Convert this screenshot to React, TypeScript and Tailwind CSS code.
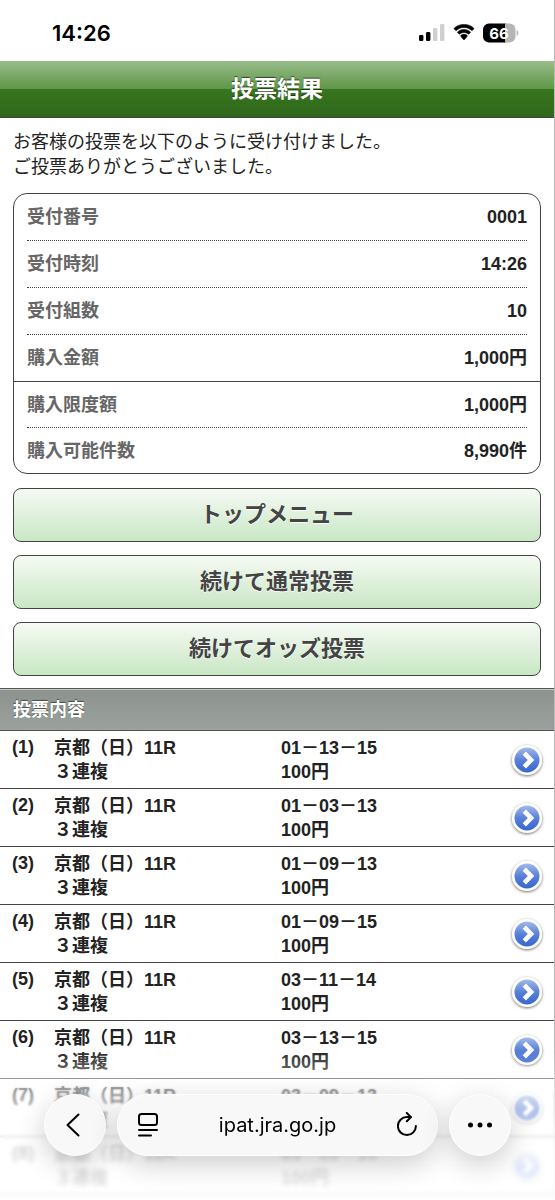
import { Fragment } from "react";

const receipt = [
  { label: "受付番号", value: "0001" },
  { label: "受付時刻", value: "14:26" },
  { label: "受付組数", value: "10" },
  { label: "購入金額", value: "1,000円" },
];

const limits = [
  { label: "購入限度額", value: "1,000円" },
  { label: "購入可能件数", value: "8,990件" },
];

const actions = ["トップメニュー", "続けて通常投票", "続けてオッズ投票"];

const bets = [
  "01－13－15",
  "01－03－13",
  "01－09－13",
  "01－09－15",
  "03－11－14",
  "03－13－15",
  "03－09－13",
  "03－09－15",
];

function StatusBar() {
  return (
    <div className="flex h-[61px] items-center justify-between pl-[52px] pr-[35px] pt-1 text-black">
      <span className="font-['Inter',sans-serif] text-[22px] font-semibold">14:26</span>
      <div className="flex items-center gap-2">
        {/* Signal */}
        <svg width="26" height="17" viewBox="0 0 26 17">
          <rect x="0" y="11" width="4.4" height="6" rx="1.3" />
          <rect x="7" y="8" width="4.4" height="9" rx="1.3" />
          <rect x="14" y="4" width="4.4" height="13" rx="1.3" fill="#cfcfcf" />
          <rect x="21" y="0" width="4.4" height="17" rx="1.3" fill="#cfcfcf" />
        </svg>
        {/* Wifi */}
        <svg width="22" height="17" viewBox="0 0 22 17" stroke="currentColor" strokeWidth="0.6">
          <path d="M11 3.4c2.9 0 5.6 1.1 7.6 3 .2.2.5.2.7 0l1.5-1.5c.2-.2.2-.5 0-.7C18.2 1.600 14.700.4 11 .4S3.800 1.600 1.200 4.200c-.2.2-.2.5 0 .7l1.500 1.500c.2.200.5.200.7 0 2-1.900 4.700-3 7.600-3z" />
          <path d="M11 8.500c1.600 0 3.100.6 4.200 1.600.2.200.5.200.7 0l1.500-1.500c.2-.2.2-.5 0-.7C15.700 6.300 13.400 5.400 11 5.400s-4.700.9-6.400 2.500c-.2.2-.2.500 0 .7l1.500 1.500c.2.200.5.200.7 0C7.900 9.100 9.400 8.500 11 8.500z" />
          <path d="M14.200 12.200c.2-.2.2-.5 0-.7-.8-.8-2-1.200-3.200-1.200s-2.400.4-3.200 1.200c-.2.2-.2.5 0 .7l2.800 3.500c.2.200.6.200.8 0z" />
        </svg>
        {/* Battery */}
        <svg width="36" height="20" viewBox="0 0 36 20">
          <path d="M6 .5h17v19H6a6 6 0 0 1-6-6v-7a6 6 0 0 1 6-6z" />
          <path d="M22 .5h4.500a6 6 0 0 1 6 6v7a6 6 0 0 1-6 6H22z" fill="#b5b5b5" />
          <path d="M33.700 7c1 .4 1.600 1.600 1.600 3s-.6 2.600-1.600 3z" fill="#b5b5b5" />
          <text x="16" y="15.500" textAnchor="middle" fontFamily="Inter, sans-serif" fontSize="15" fontWeight="700" fill="#fff">
            66
          </text>
        </svg>
      </div>
    </div>
  );
}

function Arrow() {
  return (
    <svg width="36" height="36" viewBox="0 0 36 36" className="shrink-0">
      <defs>
        <linearGradient id="arrowFill" x1="0" y1="0" x2="0" y2="1">
          <stop offset="0" stopColor="#a3baea" />
          <stop offset="0.5" stopColor="#5a80d8" />
          <stop offset="1" stopColor="#3566d2" />
        </linearGradient>
        <filter id="arrowShadow" x="-20%" y="-20%" width="140%" height="140%">
          <feDropShadow dx="0" dy="1" stdDeviation="1.4" floodColor="#000" floodOpacity="0.6" />
        </filter>
      </defs>
      <circle cx="18" cy="18" r="15" fill="#fff" filter="url(#arrowShadow)" />
      <circle cx="18" cy="18" r="12.5" fill="url(#arrowFill)" />
      <path d="M15.300 11.200l6.800 6.800-6.800 6.800" fill="none" stroke="#fff" strokeWidth="4.600" />
    </svg>
  );
}

function Rows({ items, height }: { items: typeof receipt; height: string }) {
  return (
    <dl className="px-[13px]">
      {items.map((item, i) => (
        <Fragment key={item.label}>
          {i > 0 && <div className="border-t border-dotted border-[#444]" />}
          <div className={`flex items-center justify-between ${height}`}>
            <dt className="text-[#666]">{item.label}</dt>
            <dd>{item.value}</dd>
          </div>
        </Fragment>
      ))}
    </dl>
  );
}

function Toolbar() {
  const glass = "rounded-full border border-white bg-[#f8f8f8] shadow-[0_8px_28px_rgba(0,0,0,0.2)]";
  return (
    <div className="fixed inset-x-0 bottom-0">
      {/* Content blurs and fades out behind the bar */}
      <div className="absolute inset-x-0 bottom-0 h-[120px] mask-t-from-85% backdrop-blur-[1px]" />
      <div className="absolute inset-x-0 bottom-0 h-[90px] mask-t-from-50% backdrop-blur-[2px]" />
      <div className="absolute inset-x-0 bottom-0 h-[150px] bg-[linear-gradient(to_bottom,rgba(255,255,255,0),rgba(255,255,255,0.45)_20%,rgba(255,255,255,0.55)_40%,rgba(255,255,255,0.8)_63%,rgba(255,255,255,0.88))]" />
      <div className="relative flex gap-[11px] px-[44px] pb-[44px] font-['Inter',sans-serif] text-black">
        <button aria-label="Back" className={`flex size-[62px] shrink-0 items-center justify-center pr-1 ${glass}`}>
          <svg width="14" height="24" viewBox="0 0 14 24" fill="none" stroke="currentColor" strokeWidth="2" strokeLinecap="round" strokeLinejoin="round">
            <path d="M12.500 1.500L1.500 12l11 10.500" />
          </svg>
        </button>
        <div className={`flex h-[62px] flex-1 items-center justify-between px-5 ${glass}`}>
          <button aria-label="Page menu">
            <svg width="20" height="24" viewBox="0 0 20 24" fill="none" stroke="currentColor" strokeWidth="2" strokeLinecap="round">
              <rect x="1" y="1" width="18" height="11" rx="2.500" />
              <path d="M1 17h18M1 22.500h12" />
            </svg>
          </button>
          <a href="#" className="text-[20px]">ipat.jra.go.jp</a>
          <button aria-label="Reload">
            <svg width="20" height="26" viewBox="1 0 20 26" fill="none" stroke="currentColor" strokeWidth="2" strokeLinecap="round" strokeLinejoin="round">
              <path d="M19.900 14a9 9 0 1 1-9-8.900h3.700" />
              <path d="M10.800 1l4.200 4.100-4.200 4.200" />
            </svg>
          </button>
        </div>
        <button aria-label="More" className={`flex size-[62px] shrink-0 items-center justify-center ${glass}`}>
          <svg width="26" height="6" viewBox="0 0 26 6" fill="currentColor">
            <circle cx="3.500" cy="3" r="2.500" />
            <circle cx="13" cy="3" r="2.500" />
            <circle cx="22.500" cy="3" r="2.500" />
          </svg>
        </button>
      </div>
    </div>
  );
}

export default function App() {
  return (
    <div className="min-h-screen border-r border-[#b8b8b8] bg-white font-['Liberation_Sans','Noto_Sans_CJK_JP',sans-serif] text-[18px] leading-6 text-[#222]">
      <StatusBar />

      <header className="flex h-[57px] items-center justify-center border-b border-[#444] bg-[linear-gradient(to_bottom,#98bc8b,#5f9747_50%,#38751f_50%,#2f671b)]">
        <h1 className="text-[23px] font-bold text-white text-shadow-[0_-1px_1px_rgba(0,0,0,0.6)]">投票結果</h1>
      </header>

      <main>
        <p className="px-[13px] pt-3 leading-[25px]">
          お客様の投票を以下のように受け付けました。
          <br />
          ご投票ありがとうございました。
        </p>

        <section className="mx-[13px] mt-[13px] rounded-[14px] border border-[#444] font-bold">
          <Rows items={receipt} height="h-[46px]" />
          <div className="border-t border-[#444]" />
          <Rows items={limits} height="h-[45px]" />
        </section>

        <div className="mx-[13px] mt-[14px] flex flex-col gap-[13px]">
          {actions.map((label) => (
            <button
              key={label}
              className="h-[54px] rounded-lg border border-[#444] bg-linear-to-b from-[#f6faf4] to-[#c8e7c4] text-[22px] font-bold text-[#444] text-shadow-[0_1px_1px_rgba(255,255,255,0.9)]"
            >
              {label}
            </button>
          ))}
        </div>

        <h2 className="mt-3 flex h-[43px] items-center border-y border-[#555] bg-linear-to-b from-[#8c938e] to-[#9ba29d] px-[13px] font-bold text-white inset-shadow-[0_1px_0_#c4cac6] text-shadow-[0_-1px_1px_rgba(0,0,0,0.5)]">
          投票内容
        </h2>

        <ul className="font-bold">
          {bets.map((combo, i) => (
            <li key={combo} className="border-b border-[#444]">
              <a href="#" className="flex h-[57px] items-center pl-3 pr-[9px]">
                <span className="w-[42px] self-start pt-1">({i + 1})</span>
                <span className="w-[227px]">
                  京都（日）11R
                  <br />
                  ３連複
                </span>
                <span className="flex-1">
                  {combo}
                  <br />
                  100円
                </span>
                <Arrow />
              </a>
            </li>
          ))}
        </ul>
      </main>

      <Toolbar />
    </div>
  );
}
